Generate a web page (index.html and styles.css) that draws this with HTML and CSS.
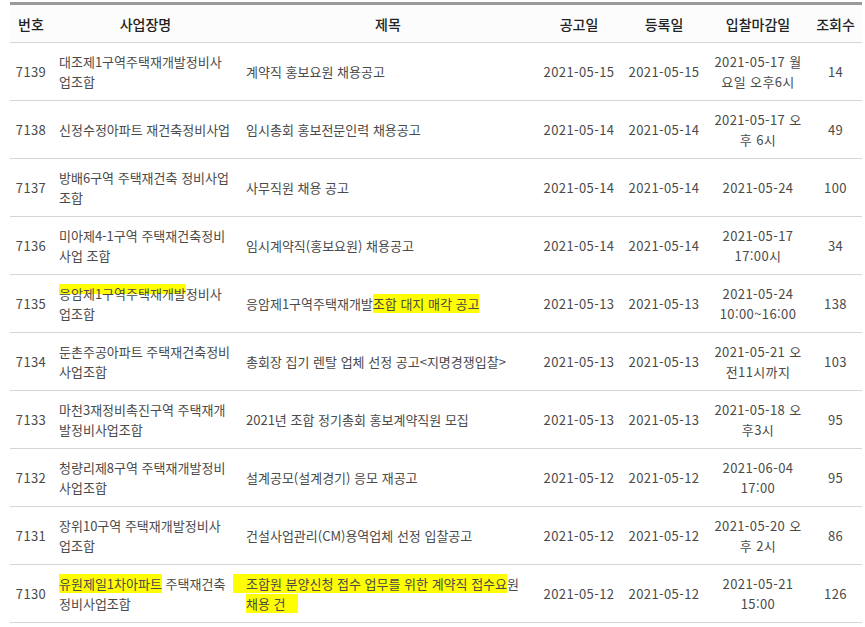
FILE: index.html
```html
<!DOCTYPE html>
<html lang="ko">
<head>
<meta charset="utf-8">
<title>입찰공고</title>
<link rel="stylesheet" href="styles.css">
</head>
<body>
<table class="board">
  <colgroup>
    <col class="c-no"><col class="c-org"><col class="c-title"><col class="c-date"><col class="c-date2"><col class="c-due"><col class="c-view">
  </colgroup>
  <thead>
    <tr>
      <th>번호</th><th>사업장명</th><th>제목</th><th>공고일</th><th>등록일</th><th>입찰마감일</th><th>조회수</th>
    </tr>
  </thead>
  <tbody>
    <tr>
      <td class="num">7139</td><td class="kr">대조제1구역주택재개발정비사<br>업조합</td><td class="kr">계약직 홍보요원 채용공고</td><td class="num">2021-05-15</td><td class="num">2021-05-15</td><td class="num">2021-05-17 월<br>요일 오후6시</td><td class="num">14</td>
    </tr>
    <tr>
      <td class="num">7138</td><td class="kr">신정수정아파트 재건축정비사업</td><td class="kr">임시총회 홍보전문인력 채용공고</td><td class="num">2021-05-14</td><td class="num">2021-05-14</td><td class="num">2021-05-17 오<br>후 6시</td><td class="num">49</td>
    </tr>
    <tr>
      <td class="num">7137</td><td class="kr">방배6구역 주택재건축 정비사업<br>조합</td><td class="kr">사무직원 채용 공고</td><td class="num">2021-05-14</td><td class="num">2021-05-14</td><td class="num">2021-05-24</td><td class="num">100</td>
    </tr>
    <tr>
      <td class="num">7136</td><td class="kr">미아제4-1구역 주택재건축정비<br>사업 조합</td><td class="kr">임시계약직(홍보요원) 채용공고</td><td class="num">2021-05-14</td><td class="num">2021-05-14</td><td class="num">2021-05-17<br>17:00시</td><td class="num">34</td>
    </tr>
    <tr>
      <td class="num">7135</td><td class="kr"><span class="mark-top">응암제1구역주택재개발</span>정비사<br>업조합</td><td class="kr">응암제1구역주택재개발<span class="mark">조합 대지 매각 공고</span></td><td class="num">2021-05-13</td><td class="num">2021-05-13</td><td class="num">2021-05-24<br>10:00~16:00</td><td class="num">138</td>
    </tr>
    <tr>
      <td class="num">7134</td><td class="kr">둔촌주공아파트 주택재건축정비<br>사업조합</td><td class="kr">총회장 집기 렌탈 업체 선정 공고&lt;지명경쟁입찰&gt;</td><td class="num">2021-05-13</td><td class="num">2021-05-13</td><td class="num">2021-05-21 오<br>전11시까지</td><td class="num">103</td>
    </tr>
    <tr>
      <td class="num">7133</td><td class="kr">마천3재정비촉진구역 주택재개<br>발정비사업조합</td><td class="kr">2021년 조합 정기총회 홍보계약직원 모집</td><td class="num">2021-05-13</td><td class="num">2021-05-13</td><td class="num">2021-05-18 오<br>후3시</td><td class="num">95</td>
    </tr>
    <tr>
      <td class="num">7132</td><td class="kr">청량리제8구역 주택재개발정비<br>사업조합</td><td class="kr">설계공모(설계경기) 응모 재공고</td><td class="num">2021-05-12</td><td class="num">2021-05-12</td><td class="num">2021-06-04<br>17:00</td><td class="num">95</td>
    </tr>
    <tr>
      <td class="num">7131</td><td class="kr">장위10구역 주택재개발정비사<br>업조합</td><td class="kr">건설사업관리(CM)용역업체 선정 입찰공고</td><td class="num">2021-05-12</td><td class="num">2021-05-12</td><td class="num">2021-05-20 오<br>후 2시</td><td class="num">86</td>
    </tr>
    <tr>
      <td class="num">7130</td><td class="kr"><span class="mark">유원제일1차아파트</span> 주택재건축<br>정비사업조합</td><td class="kr"><span class="mark mark-lead">조합원 분양신청 접수 업무를 위한 계약직 접수요</span>원<br><span class="mark mark-tail">채용 건</span></td><td class="num">2021-05-12</td><td class="num">2021-05-12</td><td class="num">2021-05-21<br>15:00</td><td class="num">126</td>
    </tr>
  </tbody>
</table>
</body>
</html>
```

FILE: styles.css
```css
html, body {
  background: #ffffff;
}
body {
  margin: 2px 0 0 10px;
  font-family: "Noto Sans CJK KR", "Noto Sans", sans-serif;
  font-size: 13px;
  color: #4a4a4a;
}
.board {
  width: 852px;
  border-collapse: collapse;
  table-layout: fixed;
  border-top: 3px solid #9a9a9a;
}
.c-no { width: 42px; }
.c-org { width: 187px; }
.c-title { width: 298px; }
.c-date { width: 84px; }
.c-date2 { width: 86px; }
.c-due { width: 102px; }
.c-view { width: 53px; }

.board th {
  height: 37px;
  padding: 0;
  background: #fcfcfc;
  color: #222222;
  font-size: 14px;
  font-weight: 500;
  text-align: center;
  border-bottom: 1px solid #d6d6d6;
}
.board td {
  height: 57px;
  padding: 0 7px;
  line-height: 20px;
  vertical-align: middle;
  border-bottom: 1px solid #d6d6d6;
  white-space: nowrap;
  overflow: visible;
}
.board td.num {
  text-align: center;
  padding: 0 2px;
  letter-spacing: 0.4px;
}
.board td.kr {
  text-align: left;
}
.mark {
  background: #ffff00;
}
.mark-top {
  background: linear-gradient(#ffff00, #ffff00) no-repeat 0 0 / 100% 55%;
}
.mark-lead {
  margin-left: -13px;
  padding-left: 13px;
}
.mark-tail {
  padding-right: 12px;
}
```
